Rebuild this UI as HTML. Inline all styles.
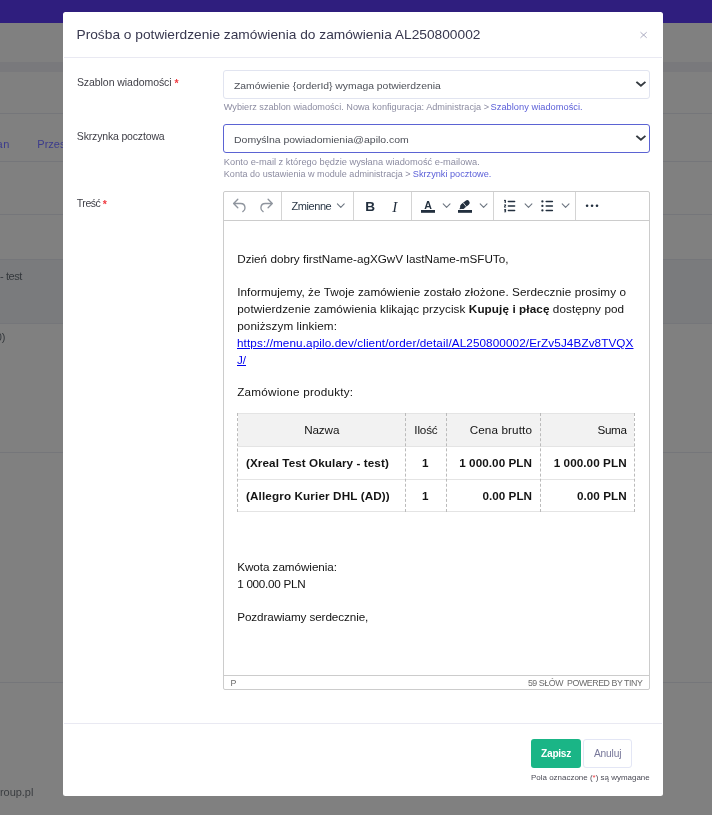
<!DOCTYPE html>
<html lang="pl"><head><meta charset="utf-8"><title>Prośba o potwierdzenie zamówienia</title>
<style>
*{box-sizing:border-box;margin:0;padding:0}
html,body{width:712px;height:815px;overflow:hidden}
body{position:relative;background:#808080;font-family:"Liberation Sans", sans-serif;-webkit-font-smoothing:antialiased}
.a{position:absolute}
.t{position:absolute;white-space:nowrap;line-height:20px;height:20px}
#page{position:absolute;left:0;top:0;width:712px;height:815px;overflow:hidden;will-change:transform}
.ln{position:absolute;left:0;width:712px;height:1px;background:#75767a}
.sep{position:absolute;top:192px;width:1px;height:28px;background:#d4d4d4}
b{font-weight:700}
</style></head>
<body>
<div id="page">
<!-- dimmed page behind the dialog -->
<div class="a" style="left:0;top:0;width:712px;height:23px;background:#2f1e7e"></div>
<div class="a" style="left:0;top:62px;width:712px;height:10px;background:#79797c"></div>
<div class="ln" style="top:113px"></div>
<div class="ln" style="top:161px"></div>
<div class="ln" style="top:214px"></div>
<div class="a" style="left:0;top:259px;width:712px;height:65px;background:#7a7b7d"></div>
<div class="ln" style="top:259px"></div>
<div class="ln" style="top:323px"></div>
<div class="ln" style="top:452px"></div>
<div class="ln" style="top:682px"></div>
<span class="t" id="bg1" style="left:-3.50px;top:134.00px;font-size:11.00px;color:#3b3b8c;letter-spacing:0.625px;">an</span>
<span class="t" id="bg2" style="left:37.30px;top:134.00px;font-size:11.00px;color:#3b3b8c;letter-spacing:0.000px;">Przesy</span>
<span class="t" id="bg3" style="left:0.00px;top:266.00px;font-size:11.00px;color:#34383c;letter-spacing:-0.409px;">- test</span>
<span class="t" id="bg4" style="left:-4.30px;top:327.00px;font-size:11.00px;color:#34383c;letter-spacing:0.000px;">0)</span>
<span class="t" id="bg5" style="left:0.00px;top:782.00px;font-size:11.00px;color:#3a3d40;letter-spacing:-0.049px;">roup.pl</span>
<!-- dialog -->
<div class="a" id="modal" style="left:63px;top:12px;width:600px;height:783.5px;background:#fff;border-radius:2.5px"></div>
<div class="a" style="left:64px;top:57px;width:598px;height:1px;background:#e9e9f2"></div>
<div class="a" style="left:64px;top:723px;width:598px;height:1px;background:#e9e9f2"></div>
<!-- close -->
<svg class="a" style="left:639px;top:30px" width="10" height="10" viewBox="0 0 10 10"><path d="M1.5 2.2 L7.7 7.8 M7.7 2.2 L1.5 7.8" stroke="#a3a3ba" stroke-width="0.9" fill="none"/></svg>
<!-- selects -->
<div class="a" style="left:223px;top:70px;width:426.5px;height:29px;border:1px solid #e1e4f0;border-radius:3px;background:#fff"></div>
<div class="a" style="left:223px;top:124px;width:426.5px;height:29px;border:1px solid #5b63d3;border-radius:3px;background:#fff"></div>
<svg class="a" style="left:634px;top:79px" width="14" height="10" viewBox="0 0 14 10"><path d="M3.1 3.5 L6.9 6.7 L10.7 3.5" stroke="#343a40" stroke-width="1.9" fill="none" stroke-linecap="square" stroke-linejoin="miter"/></svg>
<svg class="a" style="left:634px;top:133px" width="14" height="10" viewBox="0 0 14 10"><path d="M3.1 3.5 L6.9 6.7 L10.7 3.5" stroke="#343a40" stroke-width="1.9" fill="none" stroke-linecap="square" stroke-linejoin="miter"/></svg>
<!-- editor frame -->
<div class="a" id="editor" style="left:223px;top:191px;width:426.5px;height:499px;border:1px solid #ccc;border-radius:2px;background:#fff"></div>
<div class="a" style="left:224px;top:220px;width:424.5px;height:1px;background:#ccc"></div>
<div class="a" style="left:224px;top:675px;width:424.5px;height:1px;background:#ccc"></div>
<div class="sep" style="left:281px"></div>
<div class="sep" style="left:353px"></div>
<div class="sep" style="left:411px"></div>
<div class="sep" style="left:493px"></div>
<div class="sep" style="left:575px"></div>
<!-- toolbar icons -->
<svg class="a" style="left:224px;top:192px" width="425" height="28" viewBox="224 192 425 28">
<g fill="none" stroke="#8f959e" stroke-width="1.35" stroke-linecap="round" stroke-linejoin="round"><path d="M237.8 199.3 L233.6 203.5 L237.8 207.7 M233.9 203.5 H240.6 Q245 203.6 245 208 Q245 210.4 242.8 211.6"/><path d="M268.1 199.3 L272.3 203.5 L268.1 207.7 M272 203.5 H265.3 Q260.9 203.6 260.9 208 Q260.9 210.4 263.1 211.6"/></g>
<g fill="none" stroke="#6c7580" stroke-width="1.1" stroke-linecap="round" stroke-linejoin="round"><path d="M337.4 203.9 L340.8 207.3 L344.2 203.9"/><path d="M443.2 203.9 L446.6 207.3 L450.0 203.9"/><path d="M480.2 203.9 L483.6 207.3 L487.0 203.9"/><path d="M525.1 203.9 L528.5 207.3 L531.9 203.9"/><path d="M562.2 203.9 L565.6 207.3 L569.0 203.9"/></g>
<g fill="#222f3e">
<rect x="421" y="210" width="14" height="2.8"/>
<rect x="458" y="210" width="14" height="2.8"/>
<path d="M459.4 209.3 L460.9 205.4 L464.5 208.5 Z"/>
</g>
<path d="M462.7 206.3 L467.2 202.7" stroke="#222f3e" stroke-width="5" stroke-linecap="round" fill="none"/>
<path d="M463.4 203 L466.4 206.8" stroke="#fff" stroke-width="0.8" fill="none"/>
<g stroke="#222f3e" stroke-width="1.5" stroke-linecap="round" fill="none">
<path d="M508.4 201.4 H514.6 M508.4 205.9 H514.6 M508.4 210.5 H514.6"/>
<path d="M546.2 201.4 H552.4 M546.2 205.9 H552.4 M546.2 210.4 H552.4"/>
</g>
<g fill="#222f3e">
<rect x="504.6" y="199.9" width="1.3" height="3"/><rect x="504" y="199.9" width="1" height="1"/>
<path d="M504 204.4 h2.1 v1.4 l-1.2 1 h1.2 v0.8 h-2.1 v-1 l1.2 -1.2 h-1.2z"/>
<path d="M504 209 h2.1 v3.2 h-2.1 v-0.8 h1.2 v-0.5 h-1 v-0.7 h1 v-0.4 h-1.2z"/>
<circle cx="542.4" cy="201.4" r="1.15"/><circle cx="542.4" cy="205.9" r="1.15"/><circle cx="542.4" cy="210.4" r="1.15"/>
<circle cx="587.1" cy="205.8" r="1.3"/><circle cx="592.05" cy="205.8" r="1.3"/><circle cx="597" cy="205.8" r="1.3"/>
</g>
</svg>
<span class="a" style="left:365.3px;top:196.6px;font:700 13.6px/20px 'Liberation Sans',sans-serif;color:#222f3e">B</span>
<span class="a" style="left:392.3px;top:196.6px;font:italic 400 15.2px/20px 'Liberation Serif',serif;color:#222f3e">I</span>
<span class="a" style="left:424.2px;top:195.3px;font:700 10.6px/20px 'Liberation Sans',sans-serif;color:#222f3e">A</span>
<!-- table -->
<div class="a" style="left:238px;top:414px;width:396px;height:32px;background:#f2f2f2"></div>
<div class="a" style="left:237.5px;top:413px;width:397.5px;height:1px;background:#e4e4e4"></div>
<div class="a" style="left:237.5px;top:446px;width:397.5px;height:1px;background:#e4e4e4"></div>
<div class="a" style="left:237.5px;top:478.5px;width:397.5px;height:1px;background:#e4e4e4"></div>
<div class="a" style="left:237.5px;top:511px;width:397.5px;height:1px;background:#e4e4e4"></div>
<div class="a" style="left:237px;top:413px;width:0;height:98.5px;border-left:1px dashed #bbb"></div>
<div class="a" style="left:405px;top:413px;width:0;height:98.5px;border-left:1px dashed #bbb"></div>
<div class="a" style="left:446px;top:413px;width:0;height:98.5px;border-left:1px dashed #bbb"></div>
<div class="a" style="left:540px;top:413px;width:0;height:98.5px;border-left:1px dashed #bbb"></div>
<div class="a" style="left:634px;top:413px;width:0;height:98.5px;border-left:1px dashed #bbb"></div>
<!-- footer buttons -->
<div class="a" style="left:531px;top:739px;width:50px;height:29px;background:#1ab586;border-radius:3px"></div>
<div class="a" style="left:583px;top:739px;width:49px;height:29px;background:#fff;border:1px solid #e3e6f5;border-radius:3px"></div>
<!-- texts -->
<span class="t" id="title" style="left:76.50px;top:25.00px;font-size:13.74px;color:#38384f;letter-spacing:-0.000px;transform-origin:0 14.00px;transform:scaleY(0.884);">Prośba o potwierdzenie zamówienia do zamówienia AL250800002</span>
<span class="t" id="l1" style="left:76.90px;top:72.00px;font-size:10.50px;color:#3e3e46;letter-spacing:-0.057px;">Szablon wiadomości <span style="color:#f0393f;position:relative;top:1.3px;font-weight:700">*</span></span>
<span class="t" id="l2" style="left:76.80px;top:126.00px;font-size:10.50px;color:#3e3e46;letter-spacing:-0.163px;">Skrzynka pocztowa</span>
<span class="t" id="l3" style="left:76.80px;top:193.00px;font-size:10.50px;color:#3e3e46;letter-spacing:-0.468px;">Treść <span style="color:#f0393f;position:relative;top:1.3px;font-weight:700">*</span></span>
<span class="t" id="s1" style="left:234.00px;top:76.00px;font-size:10.39px;color:#4d5058;letter-spacing:-0.006px;transform-origin:0 13.00px;transform:scaleY(0.941);">Zamówienie {orderId} wymaga potwierdzenia</span>
<span class="t" id="s2" style="left:234.00px;top:129.00px;font-size:10.50px;color:#4d5058;letter-spacing:-0.014px;transform-origin:0 14.00px;transform:scaleY(0.931);">Domyślna powiadomienia@apilo.com</span>
<span class="t" id="h1a" style="left:223.80px;top:97.00px;font-size:9.16px;color:#8c8ca1;letter-spacing:-0.002px;transform-origin:0 13.00px;transform:scaleY(0.946);">Wybierz szablon wiadomości. Nowa konfiguracja: Administracja &gt;</span>
<span class="t" id="h1b" style="left:490.60px;top:97.00px;font-size:9.30px;color:#5b5fd8;letter-spacing:0.001px;transform-origin:0 13.00px;transform:scaleY(0.931);">Szablony wiadomości.</span>
<span class="t" id="h2" style="left:223.80px;top:152.00px;font-size:9.31px;color:#8c8ca1;letter-spacing:0.004px;transform-origin:0 13.00px;transform:scaleY(0.930);">Konto e-mail z którego będzie wysłana wiadomość e-mailowa.</span>
<span class="t" id="h3a" style="left:223.80px;top:164.00px;font-size:9.07px;color:#8c8ca1;letter-spacing:0.004px;transform-origin:0 13.00px;transform:scaleY(0.954);">Konta do ustawienia w module administracja &gt;</span>
<span class="t" id="h3b" style="left:412.80px;top:164.00px;font-size:9.17px;color:#5b5fd8;letter-spacing:0.007px;transform-origin:0 13.00px;transform:scaleY(0.944);">Skrzynki pocztowe.</span>
<span class="t" id="zm" style="left:291.40px;top:196.00px;font-size:11.00px;color:#2a3746;letter-spacing:-0.414px;">Zmienne</span>
<span class="t" id="b1" style="left:237.20px;top:249.00px;font-size:11.70px;color:#141414;letter-spacing:0.010px;">Dzień dobry firstName-agXGwV lastName-mSFUTo,</span>
<span class="t" id="b2" style="left:237.20px;top:282.00px;font-size:11.70px;color:#141414;letter-spacing:0.076px;">Informujemy, że Twoje zamówienie zostało złożone. Serdecznie prosimy o</span>
<span class="t" id="b3" style="left:237.20px;top:299.00px;font-size:11.70px;color:#141414;letter-spacing:0.100px;">potwierdzenie zamówienia klikając przycisk <b>Kupuję i płacę</b> dostępny pod</span>
<span class="t" id="b4" style="left:237.20px;top:316.00px;font-size:11.70px;color:#141414;letter-spacing:0.096px;">poniższym linkiem:</span>
<span class="t" id="b5" style="left:237.00px;top:333.00px;font-size:11.70px;color:#0000ee;letter-spacing:0.114px;"><span style="text-decoration:underline">https://menu.apilo.dev/client/order/detail/AL250800002/ErZv5J4BZv8TVQX</span></span>
<span class="t" id="b6" style="left:237.00px;top:350.00px;font-size:11.70px;color:#0000ee;letter-spacing:-0.047px;"><span style="text-decoration:underline">J/</span></span>
<span class="t" id="b7" style="left:237.20px;top:382.00px;font-size:11.70px;color:#141414;letter-spacing:0.230px;">Zamówione produkty:</span>
<span class="t" id="b8" style="left:237.20px;top:557.00px;font-size:11.70px;color:#141414;letter-spacing:-0.053px;">Kwota zamówienia:</span>
<span class="t" id="b9" style="left:237.20px;top:574.00px;font-size:11.70px;color:#141414;letter-spacing:-0.274px;">1 000.00 PLN</span>
<span class="t" id="b10" style="left:237.20px;top:607.00px;font-size:11.70px;color:#141414;letter-spacing:-0.094px;">Pozdrawiamy serdecznie,</span>
<span class="t" id="th1" style="left:304.20px;top:420.00px;font-size:11.70px;color:#141414;letter-spacing:-0.127px;">Nazwa</span>
<span class="t" id="th2" style="left:414.30px;top:420.00px;font-size:11.70px;color:#141414;letter-spacing:-0.169px;">Ilość</span>
<span class="t" id="th3" style="left:469.70px;top:420.00px;font-size:11.70px;color:#141414;letter-spacing:0.120px;">Cena brutto</span>
<span class="t" id="th4" style="left:597.50px;top:420.00px;font-size:11.70px;color:#141414;letter-spacing:-0.337px;">Suma</span>
<span class="t" id="r1a" style="left:246.00px;top:453.00px;font-size:11.70px;color:#141414;letter-spacing:0.080px;"><b>(Xreal Test Okulary - test)</b></span>
<span class="t" id="r1b" style="left:422.00px;top:453.00px;font-size:11.70px;color:#141414;letter-spacing:0.084px;"><b>1</b></span>
<span class="t" id="r1c" style="left:459.20px;top:453.00px;font-size:11.70px;color:#141414;letter-spacing:0.065px;"><b>1 000.00 PLN</b></span>
<span class="t" id="r1d" style="left:553.70px;top:453.00px;font-size:11.70px;color:#141414;letter-spacing:0.073px;"><b>1 000.00 PLN</b></span>
<span class="t" id="r2a" style="left:246.00px;top:486.00px;font-size:11.70px;color:#141414;letter-spacing:0.125px;"><b>(Allegro Kurier DHL (AD))</b></span>
<span class="t" id="r2b" style="left:422.00px;top:486.00px;font-size:11.70px;color:#141414;letter-spacing:0.084px;"><b>1</b></span>
<span class="t" id="r2c" style="left:482.40px;top:486.00px;font-size:11.70px;color:#141414;letter-spacing:0.041px;"><b>0.00 PLN</b></span>
<span class="t" id="r2d" style="left:577.00px;top:486.00px;font-size:11.70px;color:#141414;letter-spacing:0.041px;"><b>0.00 PLN</b></span>
<span class="t" id="st1" style="left:230.60px;top:673.00px;font-size:8.80px;color:#6b6b6b;letter-spacing:-0.475px;">P</span>
<span class="t" id="st2" style="left:527.90px;top:673.00px;font-size:8.80px;color:#6b6b6b;letter-spacing:-0.430px;">59 SŁÓW&nbsp;&nbsp;POWERED BY TINY</span>
<span class="t" id="bt1" style="left:541.10px;top:744.00px;font-size:10.20px;color:#ffffff;letter-spacing:-0.301px;"><b>Zapisz</b></span>
<span class="t" id="bt2" style="left:594.00px;top:744.00px;font-size:10.20px;color:#77779a;letter-spacing:-0.171px;">Anuluj</span>
<span class="t" id="req" style="left:531.00px;top:768.00px;font-size:7.97px;color:#4a4a55;letter-spacing:-0.001px;transform-origin:0 12.00px;transform:scaleY(0.999);">Pola oznaczone (<span style="color:#f0393f">*</span>) są wymagane</span>
</div>
</body></html>
